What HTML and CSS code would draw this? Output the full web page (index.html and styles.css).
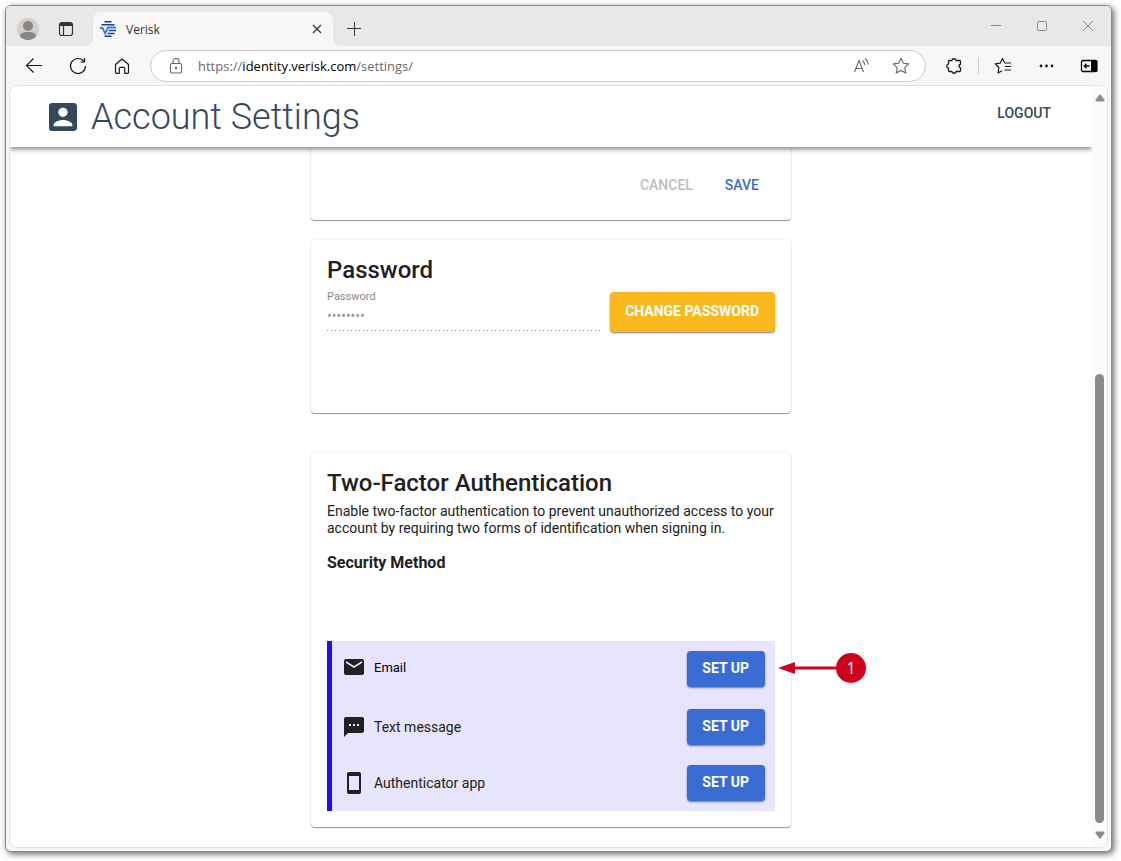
FILE: index.html
```html
<!DOCTYPE html>
<html lang="en">
<head>
    <meta charset="UTF-8">
    <meta name="viewport" content="width=device-width, initial-scale=1.0">
    <title>Account Settings</title>
    <link rel="stylesheet" href="styles.css">
</head>
<body>
    <div class="window">
        <div class="tab-bar">
            <button class="profile" aria-label="Profile">
                <svg width="24" height="24" viewBox="0 0 24 24">
                    <circle cx="12" cy="12" r="11" fill="#d3d0cc"/>
                    <circle cx="12" cy="9" r="5" fill="#8b8683"/>
                    <path d="M4 19.500c0-3.500 3-4.500 8-4.500s8 1 8 4.500a11 11 0 0 1-16 0z" fill="#8b8683"/>
                </svg>
            </button>
            <button class="tab-actions" aria-label="Tab actions">
                <svg width="16" height="16" viewBox="0 0 16 16" fill="none" stroke="#333" stroke-width="1.200">
                    <rect x="1.500" y="1.500" width="13" height="13" rx="2.500"/>
                    <path d="M2 3.500h12" stroke-width="3"/>
                    <path d="M5.500 4v10.500"/>
                </svg>
            </button>
            <div class="tab">
                <svg width="16" height="16" viewBox="0 0 16 16" fill="none" stroke-width="1.500">
                    <path d="M4.500 .8h7M1.500 3.700h13M4.500 15.200h7" stroke="#1c3f94"/>
                    <path d="M9 9.500h7M7.500 12.500h7" stroke="#1c3f94"/>
                    <path d="M0 7h2.500l2.700 5.500L8 6.500H16" stroke="#2f7de1" stroke-width="1.800"/>
                </svg>
                <span class="tab-title">Verisk</span>
                <button class="tab-close" aria-label="Close tab">
                    <svg width="10" height="10" viewBox="0 0 10 10" stroke="#333" stroke-width="1.200"><path d="M1 1l8 8M9 1l-8 8"/></svg>
                </button>
            </div>
            <button class="new-tab" aria-label="New tab">
                <svg width="14" height="14" viewBox="0 0 14 14" stroke="#333"><path d="M0 6.500h14M7.500 0v14"/></svg>
            </button>
            <div class="window-controls">
                <button aria-label="Minimize">
                    <svg width="10" height="10" viewBox="0 0 10 10" stroke="#888"><path d="M0 4.500h10"/></svg>
                </button>
                <button aria-label="Maximize">
                    <svg width="10" height="10" viewBox="0 0 10 10" stroke="#888" fill="none"><rect x=".5" y=".5" width="9" height="9" rx="1"/></svg>
                </button>
                <button aria-label="Close">
                    <svg width="10" height="10" viewBox="0 0 10 10" stroke="#888"><path d="M0 0l10 10M10 0L0 10"/></svg>
                </button>
            </div>
        </div>

        <div class="toolbar">
            <button class="nav-button" aria-label="Back">
                <svg width="18" height="18" viewBox="0 0 18 18" fill="none" stroke="#1b1b1b" stroke-width="1.200"><path d="M17 8.500H1.500M8.500 1.500l-7 7 7 7"/></svg>
            </button>
            <button class="nav-button" aria-label="Refresh">
                <svg width="18" height="18" viewBox="0 0 18 18" fill="none" stroke="#1b1b1b" stroke-width="1.200"><path d="M15 4.500a7.500 7.500 0 1 0 1.500 4.500M15.500 1v4h-4"/></svg>
            </button>
            <button class="nav-button" aria-label="Home">
                <svg width="18" height="18" viewBox="0 0 18 18" fill="none" stroke="#1b1b1b" stroke-width="1.200"><path d="M2.500 7.500L9 2l6.500 5.500v8q0 .8-.8.8h-3v-5q0-1-1-1H7.300q-1 0-1 1v5h-3q-.8 0-.8-.8z" stroke-linejoin="round"/></svg>
            </button>
            <div class="address-bar">
                <svg width="16" height="16" viewBox="0 0 16 16" fill="none" stroke="#666" stroke-width="1.100">
                    <rect x="2.500" y="5.500" width="11" height="9.500" rx="1.500"/>
                    <path d="M5 5.500V3.500a3 3 0 0 1 6 0v2"/>
                    <circle cx="8" cy="10" r=".6" fill="#444"/>
                </svg>
                <span class="url">https://<b>identity.verisk.com</b>/settings/</span>
                <button class="address-button" aria-label="Read aloud">
                    <svg width="18" height="18" viewBox="0 0 18 18" fill="none" stroke="#666" stroke-width="1.100"><path d="M2.500 15l4.500-11.500L11.500 15M4 11.500h6M10.500 3.500q2 1.500 2.300 4.500M13 1.500q3 2.500 3.300 6"/></svg>
                </button>
                <button class="address-button" aria-label="Add to favorites">
                    <svg width="18" height="18" viewBox="0 0 18 18" fill="none" stroke="#666" stroke-width="1.100"><path d="M9 1.200l2.300 5 5.400.7-4 3.700 1.100 5.500L9 13.400l-4.800 2.700 1.100-5.500-4-3.700 5.400-.7z" stroke-linejoin="round"/></svg>
                </button>
            </div>
            <div class="toolbar-actions">
                <button class="action-button" aria-label="Extensions">
                    <svg width="18" height="18" viewBox="0 0 18 18" fill="none" stroke="#1b1b1b" stroke-width="1.300"><path d="M4.500 3.500h2.300a2.200 2.200 0 0 1 4.300 0h3.400q1 0 1 1v2.700a1.900 1.900 0 0 0 0 3.700v2.600q0 1-1 1h-3.300a2.200 2.200 0 0 1-4.300 0H4.500q-1 0-1-1v-2.300a2.200 2.200 0 0 1 0-4.300V4.500q0-1 1-1z"/></svg>
                </button>
                <span class="divider"></span>
                <button class="action-button" aria-label="Favorites">
                    <svg width="18" height="18" viewBox="0 0 18 18" fill="none" stroke="#1b1b1b" stroke-width="1.200"><path d="M10.500 5.500L8.500 1.500l-2.300 4.700-5 .7 3.700 3.600-.9 5.500 4-2.200M10.500 6H17M11 9.500h6M10.500 13H17" stroke-linejoin="round"/></svg>
                </button>
                <button class="action-button" aria-label="More">
                    <svg width="18" height="18" viewBox="0 0 18 18" fill="#1b1b1b"><circle cx="4" cy="9" r="1.400"/><circle cx="9.500" cy="9" r="1.400"/><circle cx="15" cy="9" r="1.400"/></svg>
                </button>
                <button class="action-button" aria-label="Sidebar">
                    <svg width="18" height="18" viewBox="0 0 18 18" fill="none" stroke="#000" stroke-width="1.300"><rect x="1.500" y="3.500" width="15" height="11" rx="1.500"/><path d="M11 3h5q1.500 0 1.500 1.500v9q0 1.500-1.500 1.500h-5z" fill="#000" stroke="none"/><path d="M9.500 9H4.500M6.500 6.800L4.300 9l2.200 2.200"/></svg>
                </button>
            </div>
        </div>

        <div class="viewport">
            <div class="page">
                <header class="header">
                    <svg width="28" height="28" viewBox="3 3 18 18" fill="#34495e"><path d="M3 5v14a2 2 0 0 0 2 2h14c1.100 0 2-.9 2-2V5c0-1.100-.9-2-2-2H5a2 2 0 0 0-2 2zm12 4c0 1.660-1.340 3-3 3s-3-1.340-3-3 1.340-3 3-3 3 1.340 3 3zm-9 8c0-2 4-3.100 6-3.100s6 1.100 6 3.100v1H6v-1z"/></svg>
                    <h1>Account Settings</h1>
                    <button class="logout">LOGOUT</button>
                </header>

                <main class="content">
                    <section class="card card-actions">
                        <button class="text-button" disabled>CANCEL</button>
                        <button class="text-button primary">SAVE</button>
                    </section>

                    <section class="card card-password">
                        <h2>Password</h2>
                        <div class="password-row">
                            <div class="field">
                                <label for="password">Password</label>
                                <input type="password" id="password" value="password" disabled>
                            </div>
                            <button class="change-button">CHANGE PASSWORD</button>
                        </div>
                    </section>

                    <section class="card card-2fa">
                        <h2>Two-Factor Authentication</h2>
                        <p>Enable two-factor authentication to prevent unauthorized access to your account by requiring two forms of identification when signing in.</p>
                        <h3>Security Method</h3>
                        <ul class="methods">
                            <li class="method method-email">
                                <svg width="24" height="24" viewBox="0 0 24 24" fill="#212121"><path d="M20 4H4c-1.100 0-2 .9-2 2v12c0 1.100.9 2 2 2h16c1.100 0 2-.9 2-2V6c0-1.100-.9-2-2-2zm0 4l-8 5-8-5V6l8 5 8-5v2z"/></svg>
                                <span class="method-name">Email</span>
                                <button class="setup-button">SET UP</button>
                                <div class="callout">
                                    <svg width="58" height="12" viewBox="0 0 58 12" fill="#d0021b"><path d="M0 6L17 0v4.500h41v3H17V12z"/></svg>
                                    <span class="callout-number">1</span>
                                </div>
                            </li>
                            <li class="method">
                                <svg width="24" height="24" viewBox="0 0 24 24" fill="#212121"><path d="M20 2H4c-1.100 0-2 .9-2 2v18l4-4h14c1.100 0 2-.9 2-2V4c0-1.100-.9-2-2-2zM9 11H7V9h2v2zm4 0h-2V9h2v2zm4 0h-2V9h2v2z"/></svg>
                                <span class="method-name">Text message</span>
                                <button class="setup-button">SET UP</button>
                            </li>
                            <li class="method">
                                <svg width="24" height="24" viewBox="0 0 24 24" fill="#212121"><path d="M17 1H7c-1.100 0-2 .9-2 2v18c0 1.100.9 2 2 2h10c1.100 0 2-.9 2-2V3c0-1.100-.9-2-2-2zm0 18H7V5h10v14z"/></svg>
                                <span class="method-name">Authenticator app</span>
                                <button class="setup-button">SET UP</button>
                            </li>
                        </ul>
                    </section>
                </main>
            </div>

            <div class="scrollbar">
                <svg width="10" height="8" viewBox="0 0 10 8" fill="#8b8b8b"><path d="M4 1q1-1 2 0l3.500 5q.5 1.500-1 1.500h-7Q0 7.500.5 6z"/></svg>
                <div class="track">
                    <div class="thumb"></div>
                </div>
                <svg width="10" height="8" viewBox="0 0 10 8" fill="#8b8b8b"><path d="M4 7q1 1 2 0l3.500-5q.5-1.500-1-1.500h-7Q0 .5.500 2z"/></svg>
            </div>
        </div>
    </div>
</body>
</html>
```
FILE: styles.css
```css
* {
    box-sizing: border-box;
}

body {
    display: flex;
    min-height: 100vh;
    margin: 0;
    padding: 5px 9px 9px 5px;
    background: #fff;
    color: #212121;
    font-family: Roboto, sans-serif;
    font-size: 14px;
}

button {
    display: flex;
    align-items: center;
    justify-content: center;
    padding: 0;
    border: none;
    background: none;
    font-family: inherit;
    font-size: 14px;
    font-weight: 500;
    cursor: pointer;
}

svg {
    flex: none;
}

h1, h2, h3, p {
    margin: 0;
}

.window {
    flex: 1;
    display: flex;
    flex-direction: column;
    min-width: 0;
    border: 1px solid #6d8fb0;
    border-radius: 6px;
    background: #f7f7f7;
    box-shadow: 2px 2px 6px rgba(0, 0, 0, 0.6);
}

/* Browser tabs */
.tab-bar {
    display: flex;
    height: 40px;
    border-radius: 5px 5px 0 0;
    background: #e8e8e8;
}

.profile {
    width: 44px;
    padding-top: 6px;
}

.tab-actions {
    width: 32px;
    padding-top: 6px;
}

.tab {
    position: relative;
    display: flex;
    align-items: center;
    gap: 10px;
    width: 240px;
    margin: 6px 0 0 11px;
    padding: 0 8px 0 7px;
    border-radius: 8px 8px 0 0;
    background: #f7f7f7;
}

.tab::before, .tab::after {
    content: "";
    position: absolute;
    bottom: 0;
    width: 8px;
    height: 8px;
}

.tab::before {
    right: 100%;
    background: radial-gradient(circle at 0 0, transparent 8px, #f7f7f7 8px);
}

.tab::after {
    left: 100%;
    background: radial-gradient(circle at 100% 0, transparent 8px, #f7f7f7 8px);
}

.tab-title {
    flex: 1;
    color: #333;
    font-family: "Open Sans", sans-serif;
    font-size: 12px;
}

.tab-close {
    width: 16px;
    height: 16px;
}

.new-tab {
    width: 42px;
    padding-top: 6px;
}

.window-controls {
    display: flex;
    margin-left: auto;
}

.window-controls button {
    width: 46px;
}

/* Toolbar */
.toolbar {
    display: flex;
    align-items: center;
    height: 39px;
    padding: 1px 1px 0 6px;
}

.nav-button {
    width: 44px;
    height: 32px;
}

.address-bar {
    flex: 1;
    display: flex;
    align-items: center;
    height: 32px;
    margin: 0 7px 0 6px;
    padding: 0 4px 0 17px;
    border: 1px solid #ccc;
    border-radius: 16px;
    background: #fff;
}

.url {
    flex: 1;
    margin-left: 14px;
    color: #6b6b6b;
    font-family: "Open Sans", sans-serif;
    font-size: 13px;
}

.url b {
    color: #000;
    font-weight: 400;
}

.address-button {
    width: 40px;
    height: 30px;
}

.toolbar-actions {
    display: flex;
    align-items: center;
    gap: 1px;
}

.action-button {
    width: 42px;
    height: 32px;
}

.divider {
    width: 1px;
    height: 16px;
    margin: 0 2px;
    background: #ccc;
}

/* Page area */
.viewport {
    flex: 1;
    display: flex;
    margin: 0 3px 3px;
    border: 1px solid #e4e4e4;
    border-radius: 8px;
    background: #fff;
    overflow: hidden;
}

.page {
    flex: 1;
    min-width: 0;
    overflow: hidden;
}

.header {
    position: relative;
    display: flex;
    align-items: center;
    height: 61px;
    padding: 0 41px 0 39px;
    background: #fff;
    box-shadow: 0 2px 5px rgba(0, 0, 0, 0.5);
}

.header h1 {
    flex: 1;
    margin-left: 14px;
    color: #34495e;
    font-size: 36px;
    font-weight: 300;
}

.logout {
    height: 36px;
    margin-bottom: 8px;
    color: #34495e;
}

.content {
    max-width: 480px;
    margin: 0 auto;
}

.card {
    border-radius: 4px;
    background: #fff;
    box-shadow: 0 1px 1px rgba(0, 0, 0, 0.4), 0 0 2px rgba(0, 0, 0, 0.12);
}

.card-actions {
    display: flex;
    justify-content: flex-end;
    padding: 20px 0 17px;
    border-radius: 0 0 4px 4px;
}

.text-button {
    height: 36px;
    padding: 0 16px;
}

.text-button.primary {
    margin-right: 16px;
    color: #3a6dd3;
}

.text-button:disabled {
    color: #bdbdbd;
}

.card h2 {
    font-size: 24px;
    font-weight: 500;
    line-height: 28px;
}

.card-password {
    margin-top: 20px;
    padding: 16px 16px 81px;
}

.password-row {
    display: flex;
    align-items: flex-start;
    gap: 10px;
}

.field {
    flex: 1;
    display: flex;
    flex-direction: column;
}

.field label {
    color: #888;
    font-size: 11px;
    line-height: 25px;
}

.field input {
    width: 100%;
    height: 22px;
    padding: 0 0 8px;
    border: none;
    background: repeating-linear-gradient(90deg, #888 0 1px, transparent 1px 4px) bottom / 100% 1px no-repeat;
    color: #999;
    font-family: inherit;
    font-size: 14px;
}

.change-button {
    height: 40px;
    margin-top: 8px;
    padding: 0 16px 2px 15px;
    border-radius: 4px;
    background: #f8b91c;
    color: #fff;
    font-weight: 700;
    box-shadow: 0 1px 2px rgba(0, 0, 0, 0.5);
}

.card-2fa {
    margin-top: 40px;
    padding: 16px;
}

.card-2fa p {
    margin-top: 6px;
    line-height: 17px;
}

.card-2fa h3 {
    margin-top: 16px;
    font-size: 16px;
    font-weight: 700;
    line-height: 20px;
}

/* Security methods */
.methods {
    margin: 68px 0 0;
    padding: 0;
    border-left: 5px solid #1f0cff;
    background: #e7e5fd;
    list-style: none;
}

.method {
    position: relative;
    display: flex;
    align-items: center;
    gap: 8px;
    height: 56px;
    padding: 0 10px;
}

.method-email {
    height: 58px;
    padding-bottom: 2px;
}

.method-email > svg, .method-email .method-name {
    margin-bottom: 4px;
}

.method-name {
    flex: 1;
}

.method-email .method-name {
    color: #000;
    font-size: 13px;
}

.setup-button {
    height: 36px;
    padding: 0 16px 2px 15px;
    border-radius: 4px;
    background: #3a6dd3;
    color: #fff;
    font-weight: 700;
    box-shadow: 0 1px 2px rgba(0, 0, 0, 0.5);
}

.callout {
    position: absolute;
    top: 12px;
    left: 100%;
    display: flex;
    align-items: center;
    margin-left: 3px;
}

.callout-number {
    width: 30px;
    height: 30px;
    border-radius: 50%;
    background: #d0021b;
    color: #fff;
    font-family: "Open Sans", sans-serif;
    font-size: 16px;
    line-height: 30px;
    text-align: center;
}

/* Scrollbar */
.scrollbar {
    display: flex;
    flex-direction: column;
    align-items: center;
    gap: 8px;
    width: 15px;
    padding: 8px 0;
    background: #fbfbfb;
}

.track {
    flex: 1;
    display: flex;
    align-items: flex-end;
}

.thumb {
    width: 9px;
    height: 63%;
    border-radius: 5px;
    background: #8b8b8b;
}
```
